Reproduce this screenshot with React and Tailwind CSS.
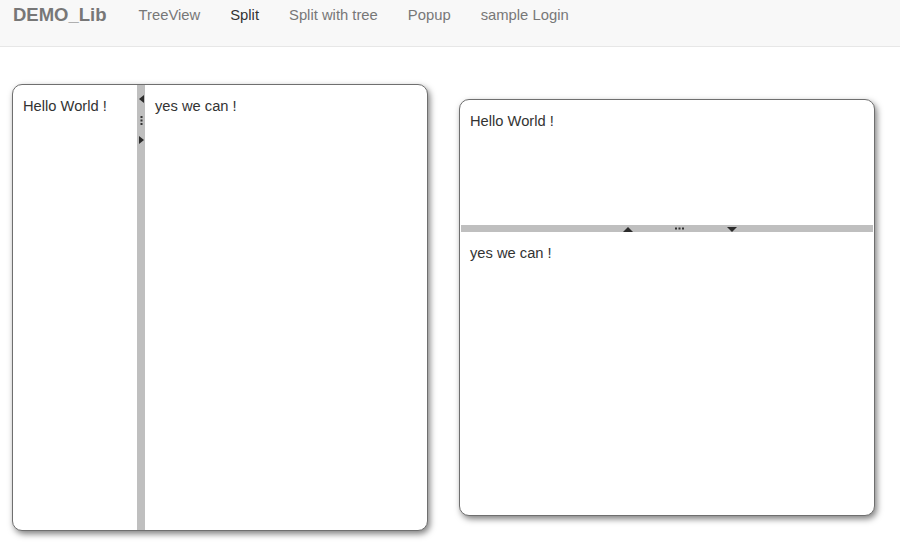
export default function App() {
  const font = { fontFamily: '"Liberation Sans", Arial, sans-serif' };
  return (
    <div className="min-h-[554px] bg-white text-[#333]" style={font}>
      <nav className="h-[47px] bg-[#f8f8f8] border-b border-[#e7e7e7] flex items-start">
        <span className="pl-[13px] pr-[15px] pt-[4px] text-[18.5px] font-bold text-[#777] leading-[22px]">DEMO_Lib</span>
        <div className="flex text-[14.8px] leading-[20px] pt-[5px] pl-[2px]">
          <span className="px-[15px] text-[#777]">TreeView</span>
          <span className="px-[15px] text-[#333]">Split</span>
          <span className="px-[15px] text-[#777]">Split with tree</span>
          <span className="px-[15px] text-[#777]">Popup</span>
          <span className="px-[15px] text-[#777]">sample Login</span>
        </div>
      </nav>

      <div className="flex items-start pl-[12px] pt-[37px] gap-[31px] text-[14.7px] leading-[20px]">
        {/* Left panel: vertical split */}
        <div className="w-[416px] h-[447px] rounded-[10px] border border-[#6f6f6f] bg-white shadow-[2px_3px_6px_rgba(0,0,0,0.5)] flex overflow-hidden">
          <div className="w-[124px] px-[10px] pt-[11px]">Hello World !</div>
          <div className="w-[8px] bg-[#bfbfbf] flex flex-col items-center pt-[10px]">
            <svg width="5" height="8" viewBox="0 0 5 8"><polygon points="5,0 0,4 5,8" fill="#2b2b2b" /></svg>
            <svg width="3" height="9" viewBox="0 0 3 9" className="mt-[13px]">
              <rect x="0.5" y="0" width="2" height="2" fill="#333" />
              <rect x="0.5" y="3.5" width="2" height="2" fill="#333" />
              <rect x="0.5" y="7" width="2" height="2" fill="#333" />
            </svg>
            <svg width="5" height="8" viewBox="0 0 5 8" className="mt-[11px]"><polygon points="0,0 5,4 0,8" fill="#2b2b2b" /></svg>
          </div>
          <div className="flex-1 px-[10px] pt-[11px]">yes we can !</div>
        </div>

        {/* Right panel: horizontal split */}
        <div className="mt-[15px] w-[416px] h-[417px] rounded-[10px] border border-[#6f6f6f] bg-white shadow-[2px_3px_6px_rgba(0,0,0,0.5)] flex flex-col overflow-hidden">
          <div className="h-[125px] px-[10px] pt-[11px]">Hello World !</div>
          <div className="h-[7px] bg-[#bfbfbf] flex items-center justify-center mx-[1px] pl-[26px]">
            <svg width="10" height="5" viewBox="0 0 10 5" className="mt-[2px]"><polygon points="0,5 5,0 10,5" fill="#2b2b2b" /></svg>
            <svg width="9" height="3" viewBox="0 0 9 3" className="ml-[42px]">
              <rect x="0" y="0.5" width="2" height="2" fill="#333" />
              <rect x="3.5" y="0.5" width="2" height="2" fill="#333" />
              <rect x="7" y="0.5" width="2" height="2" fill="#333" />
            </svg>
            <svg width="10" height="5" viewBox="0 0 10 5" className="ml-[43px] mt-[1px]"><polygon points="0,0 5,5 10,0" fill="#2b2b2b" /></svg>
          </div>
          <div className="flex-1 px-[10px] pt-[11px]">yes we can !</div>
        </div>
      </div>
    </div>
  );
}
